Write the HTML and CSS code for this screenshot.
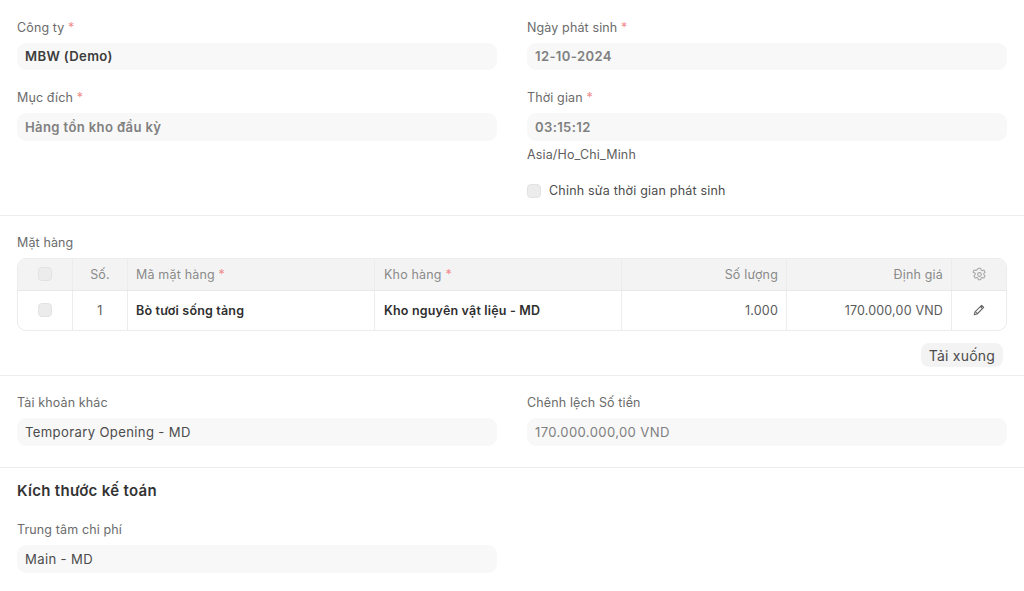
FILE: index.html
```html
<!DOCTYPE html>
<html lang="vi">
<head>
<meta charset="utf-8">
<title>Nhập kho</title>
<link rel="stylesheet" href="styles.css">
</head>
<body>
<main class="form">
  <section class="section s1">
    <div class="cols">
      <div class="col">
        <div class="field">
          <div class="label">Công ty <span class="req">*</span></div>
          <div class="input strong">MBW (Demo)</div>
        </div>
        <div class="field">
          <div class="label">Mục đích <span class="req">*</span></div>
          <div class="input muted medium">Hàng tồn kho đầu kỳ</div>
        </div>
      </div>
      <div class="col">
        <div class="field">
          <div class="label">Ngày phát sinh <span class="req">*</span></div>
          <div class="input muted medium">12-10-2024</div>
        </div>
        <div class="field">
          <div class="label">Thời gian <span class="req">*</span></div>
          <div class="input muted medium">03:15:12</div>
          <div class="hint">Asia/Ho_Chi_Minh</div>
        </div>
        <label class="check-row"><span class="check"></span><span>Chỉnh sửa thời gian phát sinh</span></label>
      </div>
    </div>
  </section>

  <section class="section s2">
    <div class="label">Mặt hàng</div>
    <div class="table">
      <div class="row head">
        <div class="cell c-check"><span class="check"></span></div>
        <div class="cell c-no">Số.</div>
        <div class="cell c-item"><span>Mã mặt hàng <span class="req">*</span></span></div>
        <div class="cell c-wh"><span>Kho hàng <span class="req">*</span></span></div>
        <div class="cell c-qty right">Số lượng</div>
        <div class="cell c-rate right">Định giá</div>
        <div class="cell c-act">
          <svg class="icon" viewBox="0 0 16 16" width="15" height="15" fill="none" stroke="#a6a6a6" stroke-width="1.1" stroke-linejoin="round"><path d="M6.7 1.4h2.6l.4 1.8 1.2.7 1.8-.6 1.3 2.3-1.4 1.2v1.4l1.4 1.2-1.3 2.3-1.8-.6-1.2.7-.4 1.8H6.7l-.4-1.8-1.2-.7-1.8.6-1.3-2.3 1.4-1.2V6.6L1 5.4l1.3-2.3 1.8.6 1.2-.7z"/><circle cx="8" cy="8" r="2"/></svg>
        </div>
      </div>
      <div class="row body">
        <div class="cell c-check"><span class="check"></span></div>
        <div class="cell c-no num">1</div>
        <div class="cell c-item link">Bò tươi sống tảng</div>
        <div class="cell c-wh link">Kho nguyên vật liệu - MD</div>
        <div class="cell c-qty right num">1.000</div>
        <div class="cell c-rate right num">170.000,00 VND</div>
        <div class="cell c-act">
          <svg class="icon" viewBox="0 0 12 12" width="12" height="12" fill="none" stroke="#666666" stroke-width="1.1" stroke-linejoin="round"><path d="M8.6 1.3l2.1 2.1-6.6 6.6-2.8.7.7-2.8z"/><path d="M7.4 2.5l2.1 2.1"/><path d="M2.3 7.7l2 2"/></svg>
        </div>
      </div>
    </div>
    <div class="actions"><button class="btn" type="button">Tải xuống</button></div>
  </section>

  <section class="section s3">
    <div class="cols">
      <div class="col">
        <div class="field">
          <div class="label">Tài khoản khác</div>
          <div class="input">Temporary Opening - MD</div>
        </div>
      </div>
      <div class="col">
        <div class="field">
          <div class="label">Chênh lệch Số tiền</div>
          <div class="input muted">170.000.000,00 VND</div>
        </div>
      </div>
    </div>
  </section>

  <section class="section s4">
    <h2 class="title">Kích thước kế toán</h2>
    <div class="cols">
      <div class="col">
        <div class="field">
          <div class="label">Trung tâm chi phí</div>
          <div class="input">Main - MD</div>
        </div>
      </div>
      <div class="col"></div>
    </div>
  </section>
</main>
</body>
</html>
```

FILE: styles.css
```css
* { box-sizing: border-box; }
html, body { margin: 0; padding: 0; }
body {
  width: 1024px;
  height: 591px;
  overflow: hidden;
  background: #fff;
  font-family: Inter, "Noto Sans", sans-serif;
  font-size: 13px;
  color: #525252;
}
.section { padding: 0 17px; border-bottom: 1px solid #ededed; }
.section:last-child { border-bottom: 0; }
.s1 { height: 216px; padding-top: 18.5px; }
.s2 { height: 160px; padding-top: 18px; }
.s3 { height: 92px; padding-top: 18px; }
.s4 { padding-top: 13px; }
.cols { display: grid; grid-template-columns: 480px 480px; column-gap: 30px; }
.col { display: flex; flex-direction: column; }
.field { margin-bottom: 19px; }
.label { font-size: 12.5px; line-height: 17px; letter-spacing: 0.13px; color: #6b6b6b; margin-bottom: 7px; }
.req { color: #f08a8a; }
.input {
  height: 27.5px;
  padding: 0 8px;
  display: flex;
  align-items: center;
  border-radius: 9px;
  background: #f8f8f8;
  font-size: 13.1px;
  letter-spacing: 0.36px;
  color: #4c4c4c;
}
.strong { font-weight: 600; color: #3d3d3d; }
.medium { font-weight: 600; }
.muted { color: #808080; }
.hint { font-size: 12.5px; line-height: 16px; letter-spacing: 0.15px; margin-top: 6.5px; color: #5f5f5f; }
.check-row { display: flex; align-items: center; gap: 8px; font-size: 12.5px; letter-spacing: 0.2px; color: #4c4c4c; line-height: 17px; }
.check { display: block; flex: none; width: 14px; height: 14px; border-radius: 4px; background: #ececec; border: 1px solid #e2e2e2; }
.table { border: 1px solid #ececec; border-radius: 9px; overflow: hidden; height: 72.5px; }
.row { display: flex; }
.head { height: 31.5px; background: #f3f3f3; border-bottom: 1px solid #e8e8e8; color: #8a8a8a; }
.body { height: 39px; }
.cell { display: flex; align-items: center; padding: 0 8px; border-right: 1px solid #ececec; font-size: 12.5px; letter-spacing: 0.18px; }
.cell:last-child { border-right: 0; }
.right { justify-content: flex-end; }
.c-check { width: 55px; justify-content: center; }
.c-no { width: 55px; justify-content: center; }
.c-item { width: 247px; }
.c-wh { width: 247px; padding-left: 9px; }
.c-qty { width: 165px; }
.c-rate { width: 165px; }
.c-act { flex: 1; justify-content: center; }
.link { font-weight: 600; color: #2f2f2f; }
.num { color: #5a5a5a; }
.actions { display: flex; justify-content: flex-end; padding: 12.5px 4px 0 0; }
.btn {
  height: 24px;
  padding: 0 8px;
  border: 0;
  border-radius: 8px;
  background: #f3f3f3;
  font: inherit;
  font-size: 14px;
  letter-spacing: 0.2px;
  color: #4c4c4c;
}
.title { margin: 0 0 20px; font-size: 15px; line-height: 20px; letter-spacing: 0.3px; font-weight: 600; color: #333; }
```
